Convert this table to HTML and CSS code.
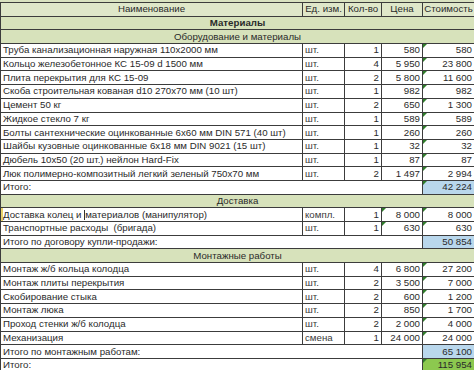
FILE: index.html
```html
<!DOCTYPE html>
<html lang="ru">
<head>
<meta charset="utf-8">
<link rel="stylesheet" href="styles.css">
</head>
<body>
<div class="sheet">
  <div class="strip"></div>
  <table class="grid">
    <colgroup>
      <col class="c-name"><col class="c-unit"><col class="c-qty"><col class="c-price"><col class="c-sum">
    </colgroup>
    <tbody>
      <tr class="head">
        <td>Наименование</td><td>Ед. изм.</td><td>Кол-во</td><td>Цена</td><td>Стоимость</td>
      </tr>
      <tr class="section"><td colspan="5" class="bold">Материалы</td></tr>
      <tr class="section"><td colspan="5">Оборудование и материалы</td></tr>
      <tr><td>Труба канализационная наружная 110х2000 мм</td><td class="unit">шт.</td><td class="num">1</td><td class="num">580</td><td class="num tri">580</td></tr>
      <tr><td>Кольцо железобетонное КС 15-09 d 1500 мм</td><td class="unit">шт.</td><td class="num">4</td><td class="num">5 950</td><td class="num tri">23 800</td></tr>
      <tr><td>Плита перекрытия для КС 15-09</td><td class="unit">шт.</td><td class="num">2</td><td class="num">5 800</td><td class="num tri">11 600</td></tr>
      <tr><td>Скоба строительная кованая d10 270х70 мм (10 шт)</td><td class="unit">шт.</td><td class="num">1</td><td class="num">982</td><td class="num tri">982</td></tr>
      <tr><td>Цемент 50 кг</td><td class="unit">шт.</td><td class="num">2</td><td class="num">650</td><td class="num tri">1 300</td></tr>
      <tr><td>Жидкое стекло 7 кг</td><td class="unit">шт.</td><td class="num">1</td><td class="num">589</td><td class="num tri">589</td></tr>
      <tr><td>Болты сантехнические оцинкованные 6х60 мм DIN 571 (40 шт)</td><td class="unit">шт.</td><td class="num">1</td><td class="num">260</td><td class="num tri">260</td></tr>
      <tr><td>Шайбы кузовные оцинкованные 6х18 мм DIN 9021 (15 шт)</td><td class="unit">шт.</td><td class="num">1</td><td class="num">32</td><td class="num tri">32</td></tr>
      <tr><td>Дюбель 10х50 (20 шт.) нейлон Hard-Fix</td><td class="unit">шт.</td><td class="num">1</td><td class="num">87</td><td class="num tri">87</td></tr>
      <tr><td>Люк полимерно-композитный легкий зеленый 750х70 мм</td><td class="unit">шт.</td><td class="num">2</td><td class="num">1 497</td><td class="num tri">2 994</td></tr>
      <tr class="total"><td colspan="4">Итого:</td><td class="num blue tri">42 224</td></tr>
      <tr class="section"><td colspan="5">Доставка</td></tr>
      <tr><td class="mark">Доставка колец и <span class="ibeam"></span>материалов (манипулятор)</td><td class="unit">компл.</td><td class="num">1</td><td class="num tri">8 000</td><td class="num tri">8 000</td></tr>
      <tr><td>Транспортные расходы&nbsp; (бригада)</td><td class="unit">шт.</td><td class="num">1</td><td class="num tri">630</td><td class="num tri">630</td></tr>
      <tr class="total"><td colspan="4">Итого по договору купли-продажи:</td><td class="num blue">50 854</td></tr>
      <tr class="section"><td colspan="5">Монтажные работы</td></tr>
      <tr><td>Монтаж ж/б кольца колодца</td><td class="unit">шт.</td><td class="num">4</td><td class="num">6 800</td><td class="num tri">27 200</td></tr>
      <tr><td>Монтаж плиты перекрытия</td><td class="unit">шт.</td><td class="num">2</td><td class="num">3 500</td><td class="num tri">7 000</td></tr>
      <tr><td>Скобирование стыка</td><td class="unit">шт.</td><td class="num">2</td><td class="num">600</td><td class="num tri">1 200</td></tr>
      <tr><td>Монтаж люка</td><td class="unit">шт.</td><td class="num">2</td><td class="num">850</td><td class="num tri">1 700</td></tr>
      <tr><td>Проход стенки ж/б колодца</td><td class="unit">шт.</td><td class="num">2</td><td class="num">2 000</td><td class="num tri">4 000</td></tr>
      <tr><td>Механизация</td><td class="unit">смена</td><td class="num">1</td><td class="num">24 000</td><td class="num tri">24 000</td></tr>
      <tr class="total"><td colspan="4">Итого по монтажным работам:</td><td class="num blue">65 100</td></tr>
      <tr class="total"><td colspan="4">Итого:</td><td class="num green tri">115 954</td></tr>
    </tbody>
  </table>
</div>
</body>
</html>
```
FILE: styles.css
```css
html, body {
  margin: 0;
  padding: 0;
  background: #ffffff;
}
.sheet {
  width: 474px;
  height: 370px;
  overflow: hidden;
  font-family: "Liberation Sans", Arial, sans-serif;
  font-size: 9.7px;
  color: #2a2a2a;
}
.strip {
  height: 2px;
  background: #d9e2c0;
}
.grid {
  width: 474px;
  border-collapse: collapse;
  table-layout: fixed;
}
.c-name { width: 302px; }
.c-unit { width: 42px; }
.c-qty { width: 37px; }
.c-price { width: 41px; }
.c-sum { width: 52px; }
.grid td {
  height: 12.7px;
  padding: 0 2px 0 2px;
  border: 1px solid #3c3c3c;
  white-space: nowrap;
  overflow: hidden;
  line-height: 12px;
  position: relative;
}
.head td {
  background: #dfe7c9;
  text-align: center;
  padding: 0 1px;
}
.section td {
  background: #d7e2bb;
  text-align: center;
}
.bold { font-weight: bold; }
.unit {
  color: #3a3a3a;
  padding-left: 3px;
}
.num { text-align: right; }
.blue { background: #b9d7ec; }
.green { background: #8cc84f; }
.tri::before {
  content: "";
  position: absolute;
  left: 0;
  top: 0;
  border-top: 4px solid #2f7d2a;
  border-right: 4px solid transparent;
}
.mark { box-shadow: inset 2px 0 0 #e8d36a; }
.ibeam {
  display: inline-block;
  width: 1px;
  height: 10px;
  margin: 0 0 -2px 0;
  background: #333;
}
```
